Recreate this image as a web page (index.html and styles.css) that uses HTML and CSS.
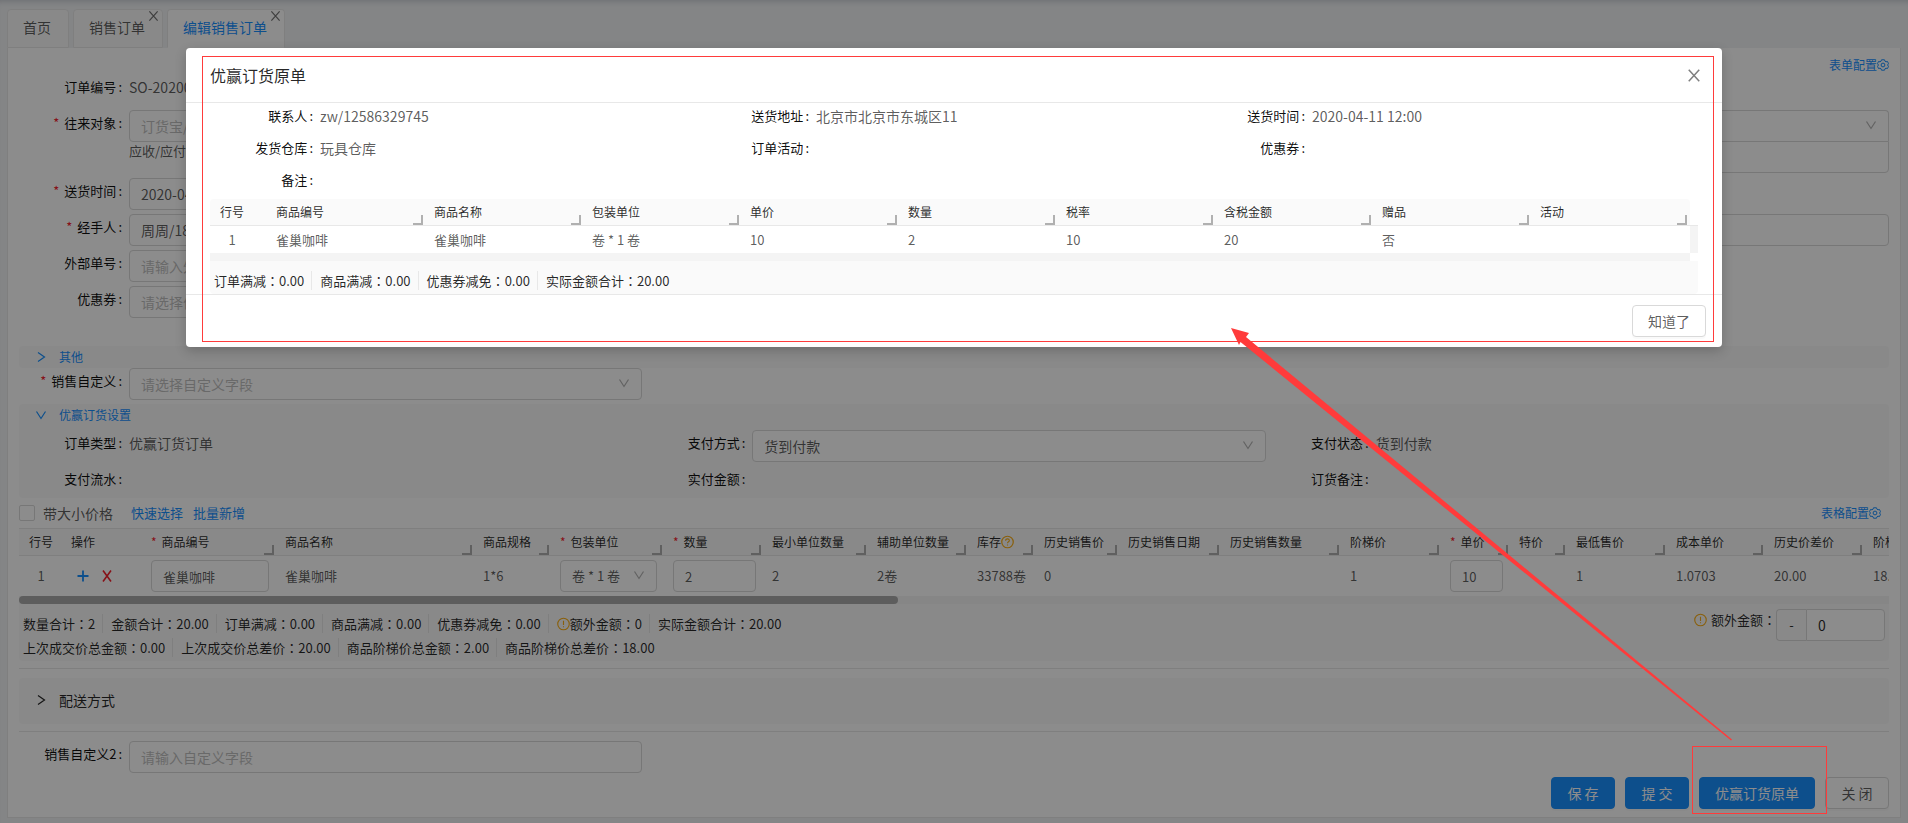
FILE: index.html
```html
<!DOCTYPE html>
<html lang="zh-CN">
<head>
<meta charset="utf-8">
<title>编辑销售订单</title>
<link rel="stylesheet" href="styles.css">
</head>
<body>
<svg class="defs" aria-hidden="true">
  <symbol id="i-x" viewBox="0 0 12 12"><path d="M1.500 1l9 10M10.500 1l-9 10" fill="none" stroke="currentColor" stroke-width="1.300"/></symbol>
  <symbol id="i-down" viewBox="0 0 12 12"><path d="M1.500 2.500L6 9.500l4.500-7" fill="none" stroke="currentColor" stroke-width="1.200"/></symbol>
  <symbol id="i-right" viewBox="0 0 12 12"><path d="M3 1.500L9.500 6 3 10.500" fill="none" stroke="currentColor" stroke-width="1.200"/></symbol>
  <symbol id="i-gear" viewBox="0 0 12 12"><path d="M4.500 .8h3l.5 1.500 1 .5 1.500-.3 1 2.200-1 1.300 1 1.300-1 2.200L9 9.200l-1 .5-.5 1.500h-3L4 9.700l-1-.5-1.500.3-1-2.200 1-1.300-1-1.300 1-2.200L3 2.800l1-.5z" fill="none" stroke="currentColor"/><circle cx="6" cy="6" r="1.900" fill="none" stroke="currentColor"/></symbol>
  <symbol id="i-info" viewBox="0 0 14 14"><circle cx="7" cy="7" r="6.200" fill="none" stroke="currentColor" stroke-width="1.200"/><path d="M7 3.500v4.500M7 9.300v1.200" stroke="currentColor" stroke-width="1.200"/></symbol>
  <symbol id="i-help" viewBox="0 0 14 14"><circle cx="7" cy="7" r="6.200" fill="none" stroke="currentColor" stroke-width="1.300"/><path d="M5 5.600C5 4.200 5.900 3.600 7 3.600s2 .7 2 1.800C9 6.800 7 6.800 7 8.400M7 9.600v1.200" fill="none" stroke="currentColor" stroke-width="1.200"/></symbol>
</svg>

<nav class="tabs">
  <a class="tab" href="#">首页</a>
  <a class="tab" href="#">销售订单<svg class="tab-x"><use href="#i-x"/></svg></a>
  <a class="tab active" href="#">编辑销售订单<svg class="tab-x"><use href="#i-x"/></svg></a>
</nav>

<main class="panel">
  <div class="config"><a href="#">表单配置<svg class="gear"><use href="#i-gear"/></svg></a></div>

  <form class="grid">
    <div class="field c1"><span class="label">订单编号<b>:</b></span><span class="value">SO-20200410</span></div>

    <div class="field c1 tall"><label class="label req" for="partner">往来对象<b>:</b></label>
      <div class="ctl"><div class="select"><select id="partner" class="hint"><option>订货宝/周周</option></select><svg><use href="#i-down"/></svg></div><span class="help">应收/应付</span></div></div>
    <div class="field c3 tall"><span class="label"></span>
      <div class="ctl"><div class="select joined-top"><select aria-label="地区"><option></option></select><svg><use href="#i-down"/></svg></div><input class="input joined-bottom" aria-label="详细地址"></div></div>

    <div class="field c1"><label class="label req" for="time">送货时间<b>:</b></label><div class="ctl"><input class="input" id="time" value="2020-04-11 12:00"></div></div>
    <div class="field c1"><label class="label req" for="agent">经手人<b>:</b></label><div class="ctl"><input class="input" id="agent" value="周周/18600000000"></div></div>
    <div class="field c3"><span class="label"></span><div class="ctl"><input class="input" aria-label="备注"></div></div>
    <div class="field c1"><label class="label" for="ext">外部单号<b>:</b></label><div class="ctl"><input class="input" id="ext" placeholder="请输入外部单号"></div></div>
    <div class="field c1"><label class="label" for="coupon">优惠券<b>:</b></label><div class="ctl"><input class="input" id="coupon" placeholder="请选择优惠券"></div></div>
  </form>

  <section class="other">
    <h3 class="fold"><svg><use href="#i-right"/></svg>其他</h3>
  </section>
  <div class="grid">
    <div class="field c1"><label class="label req" for="custom">销售自定义<b>:</b></label><div class="ctl"><div class="select"><select id="custom" class="hint"><option>请选择自定义字段</option></select><svg><use href="#i-down"/></svg></div></div></div>
  </div>

  <section class="settings">
    <h3 class="fold"><svg><use href="#i-down"/></svg>优赢订货设置</h3>
    <div class="grid">
      <div class="field c1"><span class="label">订单类型<b>:</b></span><span class="value">优赢订货订单</span></div>
      <div class="field c2"><label class="label" for="pay">支付方式<b>:</b></label><div class="ctl"><div class="select"><select id="pay"><option>货到付款</option></select><svg><use href="#i-down"/></svg></div></div></div>
      <div class="field c3"><span class="label">支付状态<b>:</b></span><span class="value">货到付款</span></div>
      <div class="field c1"><span class="label">支付流水<b>:</b></span></div>
      <div class="field c2"><span class="label">实付金额<b>:</b></span></div>
      <div class="field c3"><span class="label">订货备注<b>:</b></span></div>
    </div>
  </section>

  <div class="toolbar">
    <label class="check"><input type="checkbox">带大小价格</label>
    <a href="#">快速选择</a><a href="#">批量新增</a>
    <a class="table-config" href="#">表格配置<svg class="gear"><use href="#i-gear"/></svg></a>
  </div>

  <div class="scroller">
    <table class="data order">
      <colgroup><col class="w44"><col class="w80"><col class="w134"><col class="w198"><col class="w77"><col class="w113"><col class="w99"><col class="w105"><col class="w100"><col class="w67"><col class="w84"><col class="w102"><col class="w120"><col class="w100"><col class="w69"><col class="w57"><col class="w100"><col class="w98"><col class="w99"><col class="w100"></colgroup>
      <thead><tr>
        <th class="num">行号</th><th>操作</th><th class="rs req">商品编号</th><th class="rs">商品名称</th><th class="rs">商品规格</th><th class="rs req">包装单位</th><th class="rs req">数量</th><th class="rs">最小单位数量</th><th class="rs">辅助单位数量</th><th class="rs">库存<svg class="mark"><use href="#i-help"/></svg></th><th class="rs">历史销售价</th><th class="rs">历史销售日期</th><th class="rs">历史销售数量</th><th class="rs">阶梯价</th><th class="rs req">单价</th><th class="rs">特价</th><th class="rs">最低售价</th><th class="rs">成本单价</th><th class="rs">历史价差价</th><th class="rs">阶梯价差价</th>
      </tr></thead>
      <tbody><tr>
        <td class="num">1</td>
        <td><div class="ops"><button class="op add" aria-label="新增"><svg viewBox="0 0 12 12"><path d="M6 .500v11M.500 6h11" stroke="currentColor" stroke-width="1.800"/></svg></button><button class="op del" aria-label="删除"><svg viewBox="0 0 12 12"><path d="M2 .500l8 11M10 .500L2 11.500" stroke="currentColor" stroke-width="1.600"/></svg></button></div></td>
        <td><input class="input" aria-label="商品编号" value="雀巢咖啡"></td>
        <td>雀巢咖啡</td><td>1*6</td>
        <td><div class="select"><select aria-label="包装单位"><option>卷 * 1 卷</option></select><svg><use href="#i-down"/></svg></div></td>
        <td><input class="input" aria-label="数量" value="2"></td>
        <td>2</td><td>2卷</td><td>33788卷</td><td>0</td><td></td><td></td><td>1</td>
        <td><input class="input" aria-label="单价" value="10"></td>
        <td></td><td>1</td><td>1.0703</td><td>20.00</td><td>18.00</td>
      </tr></tbody>
    </table>
    <div class="track"><div class="thumb"></div></div>
  </div>

  <div class="summary">
    <div class="sums">
      <p class="line"><span>数量合计<i lang="zh-TW">：</i>2</span><span>金额合计<i lang="zh-TW">：</i>20.00</span><span>订单满减<i lang="zh-TW">：</i>0.00</span><span>商品满减<i lang="zh-TW">：</i>0.00</span><span>优惠券减免<i lang="zh-TW">：</i>0.00</span><span><svg class="mark"><use href="#i-info"/></svg>额外金额<i lang="zh-TW">：</i>0</span><span>实际金额合计<i lang="zh-TW">：</i>20.00</span></p>
      <p class="line"><span>上次成交价总金额<i lang="zh-TW">：</i>0.00</span><span>上次成交价总差价<i lang="zh-TW">：</i>20.00</span><span>商品阶梯价总金额<i lang="zh-TW">：</i>2.00</span><span>商品阶梯价总差价<i lang="zh-TW">：</i>18.00</span></p>
    </div>
    <div class="extra"><svg class="mark"><use href="#i-info"/></svg><label for="extra">额外金额<i lang="zh-TW">：</i></label><div class="addon"><span>-</span><input class="input" id="extra" value="0"></div></div>
  </div>

  <section class="delivery">
    <h3 class="fold"><svg><use href="#i-right"/></svg>配送方式</h3>
  </section>

  <div class="grid">
    <div class="field c1"><label class="label" for="custom2">销售自定义2<b>:</b></label><div class="ctl"><input class="input" id="custom2" placeholder="请输入自定义字段"></div></div>
  </div>
  <div class="actions">
    <button class="btn primary">保 存</button><button class="btn primary">提 交</button><button class="btn primary">优赢订货原单</button><button class="btn">关 闭</button>
  </div>
</main>

<div class="mask"></div>

<div class="modal" role="dialog" aria-labelledby="modal-title">
  <header class="modal-head"><h2 id="modal-title">优赢订货原单</h2><button class="close" aria-label="关闭"><svg><use href="#i-x"/></svg></button></header>
  <div class="modal-body">
    <div class="grid info">
      <div class="field c1"><span class="label">联系人<b>:</b></span><span class="value">zw/12586329745</span></div>
      <div class="field c2"><span class="label">送货地址<b>:</b></span><span class="value">北京市北京市东城区11</span></div>
      <div class="field c3"><span class="label">送货时间<b>:</b></span><span class="value">2020-04-11 12:00</span></div>
      <div class="field c1"><span class="label">发货仓库<b>:</b></span><span class="value">玩具仓库</span></div>
      <div class="field c2"><span class="label">订单活动<b>:</b></span></div>
      <div class="field c3"><span class="label">优惠券<b>:</b></span></div>
      <div class="field c1"><span class="label">备注<b>:</b></span></div>
    </div>
    <div class="original">
      <table class="data">
        <colgroup><col class="w58"><col><col><col><col><col><col><col><col><col></colgroup>
        <thead><tr><th class="num">行号</th><th class="rs">商品编号</th><th class="rs">商品名称</th><th class="rs">包装单位</th><th class="rs">单价</th><th class="rs">数量</th><th class="rs">税率</th><th class="rs">含税金额</th><th class="rs">赠品</th><th class="rs">活动</th></tr></thead>
        <tbody><tr><td class="num">1</td><td>雀巢咖啡</td><td>雀巢咖啡</td><td>卷 * 1 卷</td><td>10</td><td>2</td><td>10</td><td>20</td><td>否</td><td></td></tr></tbody>
      </table>
      <div class="vtrack"></div>
    </div>
    <div class="htrack"></div>
    <p class="line totals"><span>订单满减<i lang="zh-TW">：</i>0.00</span><span>商品满减<i lang="zh-TW">：</i>0.00</span><span>优惠券减免<i lang="zh-TW">：</i>0.00</span><span>实际金额合计<i lang="zh-TW">：</i>20.00</span></p>
  </div>
  <footer class="modal-foot"><button class="btn">知道了</button></footer>
  <div class="outline"></div>
</div>

<svg class="notes" viewBox="0 0 1908 823" aria-hidden="true">
  <rect x="1692.500" y="746.500" width="134" height="67" fill="none" stroke="#ff3b3b"/>
  <path d="M1231 328L1249 333 1246 337 1732 739.500 1731 740.500 1240.500 342 1239 345z" fill="#ff3b3b"/>
</svg>
</body>
</html>
```
FILE: styles.css
```css
* { box-sizing: border-box; }
body {
  margin: 0;
  padding: 9px 7px 6px;
  min-height: 100vh;
  background: #f0f2f5;
  box-shadow: inset 0 6px 6px -5px rgba(0, 21, 41, .2);
  color: rgba(0, 0, 0, .65);
  font: 14px/20px "Noto Sans CJK SC", sans-serif;
  position: relative;
}
h2, h3, p { margin: 0; font-weight: 400; }
a { color: #1890ff; text-decoration: none; }
i { font-style: normal; font-family: "Noto Sans CJK TC", sans-serif; }
input, select, button { font: inherit; color: inherit; margin: 0; }
svg { flex: none; }
.defs { position: absolute; width: 0; height: 0; }

.tabs { display: flex; gap: 4px; }
.tab {
  position: relative;
  padding: 0 17px 0 15px;
  height: 39px;
  line-height: 34px;
  border: 1px solid #e8e8e8;
  border-radius: 4px 4px 0 0;
  background: #fafafa;
  color: rgba(0, 0, 0, .65);
}
.tab.active { background: #fff; color: #1890ff; border-bottom-color: #fff; }
.tab-x { position: absolute; top: 0; right: 3px; width: 11px; height: 12px; color: rgba(0, 0, 0, .55); }

.panel {
  border: 1px solid #e8e8e8;
  border-top: 0;
  background: #fff;
  padding: 8px 11px;
}
.config { display: flex; justify-content: flex-end; font-size: 12px; line-height: 18px; }
.config a, .table-config { display: flex; align-items: center; }
.gear { width: 12px; height: 14px; }

.grid { display: grid; grid-template-columns: repeat(3, 1fr); row-gap: 4px; }
.c1 { grid-column: 1; }
.c2 { grid-column: 2; }
.c3 { grid-column: 3; }
.field { display: flex; min-height: 32px; min-width: 0; }
.tall { min-height: 64px; }
.label {
  flex: none;
  width: 110px;
  padding-right: 7px;
  text-align: right;
  font-size: 13px;
  line-height: 26px;
  color: rgba(0, 0, 0, .95);
}
.label b { margin-left: 2px; font-weight: 400; }
.label.req::before, th.req::before { content: "*"; color: #f5222d; margin-right: 5px; }
.value { line-height: 26px; }
.ctl { flex: 1; min-width: 0; }
.help { display: block; font-size: 13px; line-height: 18px; }
.input, .select select {
  display: block;
  width: 100%;
  height: 32px;
  padding: 0 11px;
  border: 1px solid #d9d9d9;
  border-radius: 4px;
  background: #fff;
  outline: 0;
  appearance: none;
}
.input::placeholder, .select .hint { color: #bfbfbf; opacity: 1; }
.select { position: relative; }
.select svg { position: absolute; right: 12px; top: 9px; width: 12px; height: 12px; color: rgba(0, 0, 0, .3); }
.joined-top select { border-radius: 4px 4px 0 0; border-bottom: 0; height: 31px; }
.input.joined-bottom { border-radius: 0 0 4px 4px; }

.fold { display: flex; align-items: center; gap: 12px; padding-left: 16px; font-size: 12px; line-height: 22px; color: #1890ff; }
.fold svg { width: 12px; height: 12px; }
.other { margin-top: 28px; background: #fafafa; border-radius: 4px; }
.settings { margin-top: 4px; background: #fafafa; border-radius: 4px; }
.settings .grid { padding-top: 4px; }

.toolbar { display: flex; align-items: center; gap: 10px; height: 30px; font-size: 13px; padding-right: 8px; }
.check { display: flex; align-items: center; gap: 8px; font-size: 14px; margin-right: 8px; }
.check input { appearance: none; width: 16px; height: 16px; border: 1px solid #d9d9d9; border-radius: 2px; background: #fff; }
.table-config { margin-left: auto; font-size: 12px; }

.scroller { overflow: hidden; border-top: 1px solid #e8e8e8; }
.data { width: 100%; table-layout: fixed; border-collapse: separate; border-spacing: 0; }
.order { width: 1846px; }
.data th {
  position: relative;
  height: 27px;
  padding: 0 8px;
  text-align: left;
  font-size: 12px;
  line-height: 18px;
  font-weight: 400;
  white-space: nowrap;
  color: rgba(0, 0, 0, .85);
  background: #fafafa;
  border-bottom: 1px solid #e8e8e8;
}
.data td { height: 27px; padding: 0 8px; font-size: 13px; line-height: 20px; white-space: nowrap; }
.data .num { text-align: center; }
.order td { height: 40px; padding-top: 4px; padding-bottom: 4px; }
.rs::after {
  content: "";
  position: absolute;
  right: 3px;
  bottom: 0;
  width: 8px;
  height: 8px;
  border: solid #b0b0b0;
  border-width: 0 2px 2px 0;
}
.mark { width: 13px; height: 14px; color: #faad14; vertical-align: -2px; }
.ops { display: flex; gap: 12px; padding-left: 6px; }
.op { width: 12px; height: 12px; padding: 0; border: 0; background: none; display: flex; }
.op svg { width: 12px; height: 12px; }
.add { color: #1890ff; }
.del { color: #f5222d; }
.w44 { width: 44px; } .w57 { width: 57px; } .w58 { width: 58px; } .w67 { width: 67px; } .w69 { width: 69px; }
.w77 { width: 77px; } .w80 { width: 80px; } .w84 { width: 84px; } .w98 { width: 98px; } .w99 { width: 99px; }
.w100 { width: 100px; } .w102 { width: 102px; } .w105 { width: 105px; } .w113 { width: 113px; } .w120 { width: 120px; }
.w134 { width: 134px; } .w198 { width: 198px; }
.track { height: 8px; background: #f4f4f4; }
.thumb { width: 47%; height: 8px; border-radius: 4px; background: #aaa; }

.summary { display: flex; justify-content: space-between; background: #fafafa; padding: 5px 4px 2px; border-radius: 0 0 4px 4px; }
.sums { padding-top: 2px; }
.line { display: flex; align-items: center; height: 24px; font-size: 13px; line-height: 19px; color: rgba(0, 0, 0, .85); }
.line span + span { margin-left: 7px; padding-left: 8px; border-left: 1px solid #e8e8e8; }
.extra { display: flex; align-items: flex-start; font-size: 13px; line-height: 22px; color: rgba(0, 0, 0, .85); }
.extra .mark { margin: 4px 4px 0 0; }
.addon { display: flex; width: 109px; }
.addon span { width: 30px; text-align: center; line-height: 30px; border: 1px solid #d9d9d9; border-right: 0; border-radius: 4px 0 0 4px; }
.addon .input { flex: 1; min-width: 0; border-radius: 0 4px 4px 0; font-size: 14px; }

.delivery { margin: 7px 0 9px; padding: 9px 0 7px; border: solid #e8e8e8; border-width: 1px 0; }
.delivery .fold { background: #fafafa; border-radius: 4px; font-size: 14px; line-height: 44px; padding-bottom: 2px; color: rgba(0, 0, 0, .85); }

.actions { display: flex; justify-content: flex-end; gap: 10px; margin-top: 4px; }
.btn { height: 32px; min-width: 64px; padding: 0 15px; border: 1px solid #d9d9d9; border-radius: 4px; background: #fff; box-shadow: 0 2px 0 rgba(0, 0, 0, .02); }
.btn.primary { background: #1890ff; border-color: #1890ff; color: #fff; }

.mask { position: absolute; inset: 0; background: rgba(0, 0, 0, .45); }
.modal {
  position: absolute;
  top: 48px;
  left: 186px;
  right: 186px;
  background: #fff;
  border-radius: 4px;
  box-shadow: 0 4px 12px rgba(0, 0, 0, .2);
}
.modal-head { display: flex; align-items: center; justify-content: space-between; height: 55px; padding: 0 21px 0 24px; border-bottom: 1px solid #e8e8e8; }
.modal-head h2 { font-size: 16px; line-height: 22px; color: rgba(0, 0, 0, .85); }
.close { display: flex; padding: 0; border: 0; background: none; color: rgba(0, 0, 0, .5); }
.close svg { width: 14px; height: 15px; }
.modal-body { padding: 0 24px; }
.info .field { min-height: 28px; }
.info { padding-bottom: 4px; }
.original { display: flex; }
.original .data { flex: 1; min-width: 0; }
.original .num { padding: 0 14px 0 0; }
.original th:first-child { border-top-left-radius: 4px; }
.original th:last-child { border-top-right-radius: 4px; }
.vtrack { width: 8px; margin-top: 26px; border-top: 1px solid #e8e8e8; background: #f4f4f4; }
.htrack { height: 8px; margin-right: 8px; background: #f4f4f4; }
.totals { height: 33px; padding: 6px 4px 0; background: #fafafa; border-radius: 0 0 4px 4px; }
.modal-foot { display: flex; justify-content: flex-end; padding: 10px 16px; border-top: 1px solid #e8e8e8; }
.outline { position: absolute; inset: 8px 8px 5px 16px; border: 1px solid #ff3b3b; pointer-events: none; }
.notes { position: absolute; top: 0; left: 0; width: 100%; pointer-events: none; }
```
